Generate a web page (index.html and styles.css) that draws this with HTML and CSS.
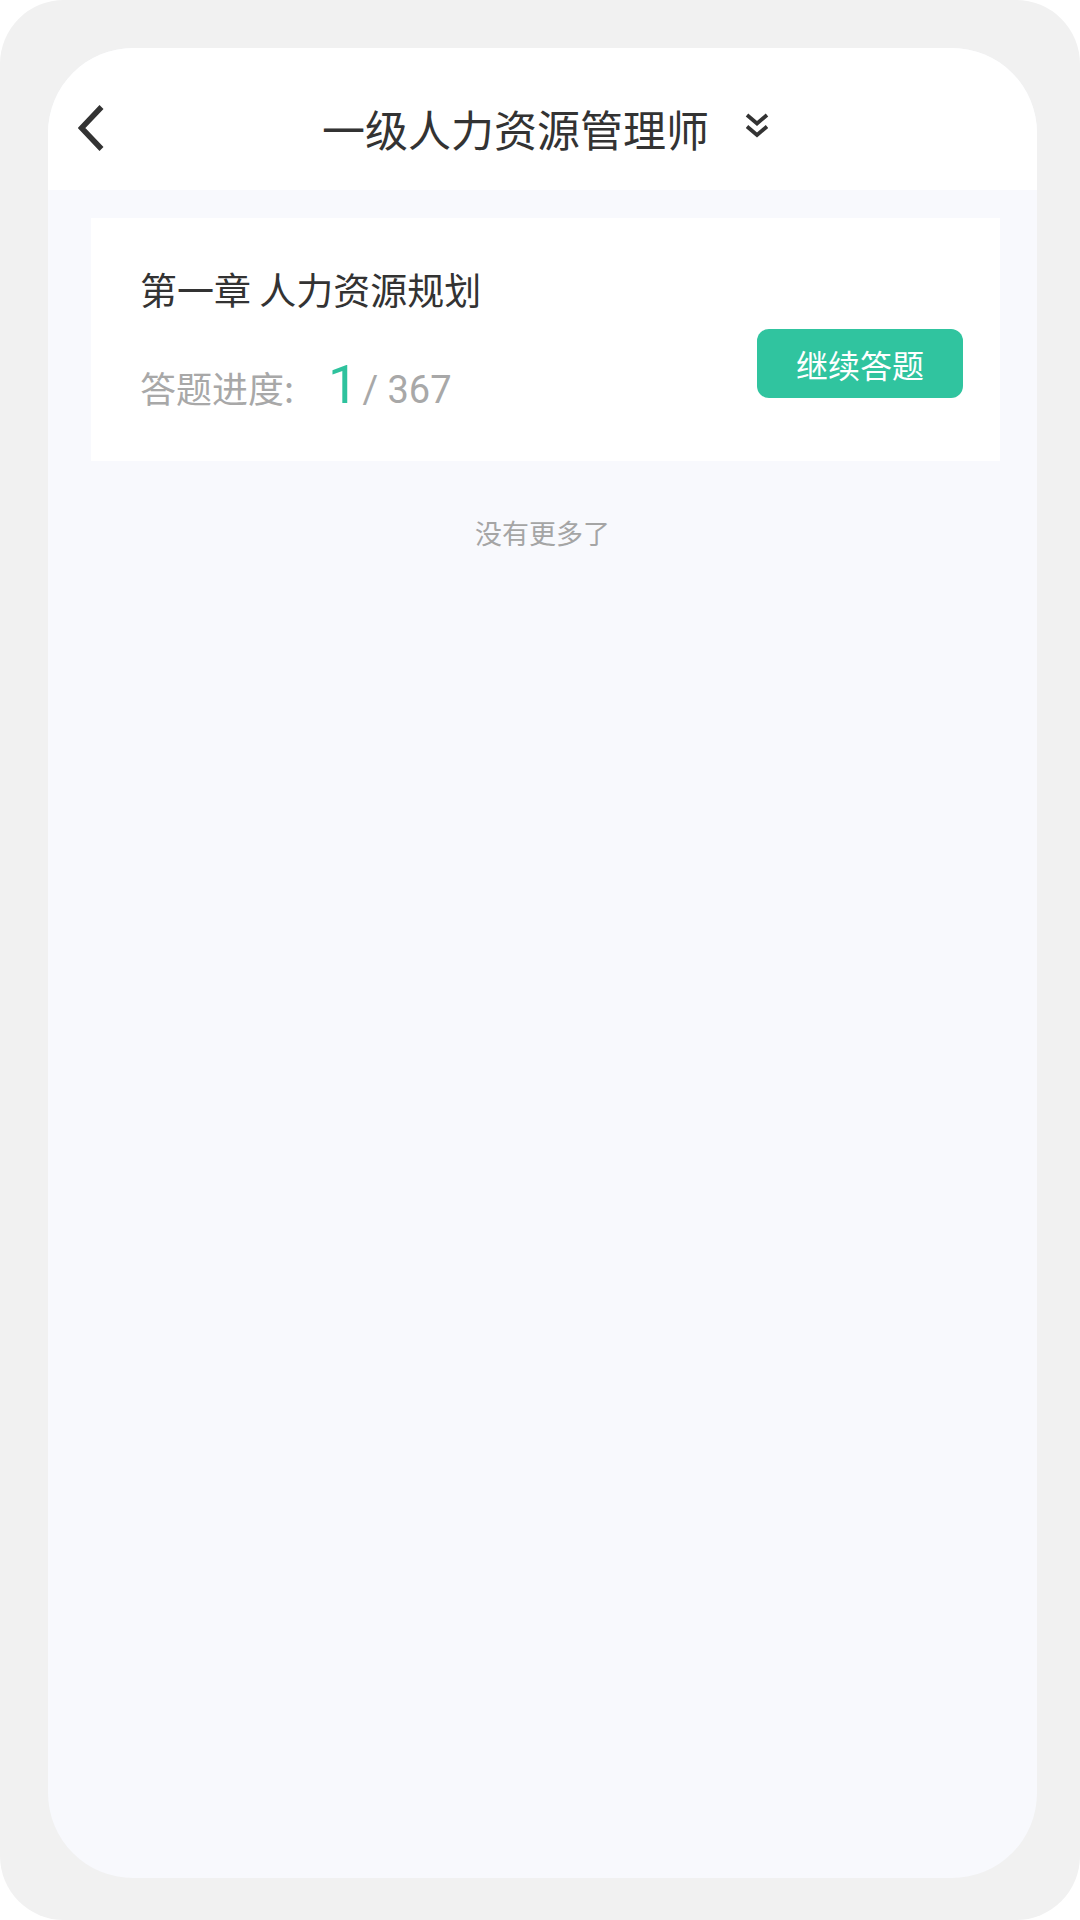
FILE: index.html
```html
<!DOCTYPE html>
<html lang="zh">
<head>
<meta charset="utf-8">
<title>一级人力资源管理师</title>
<link rel="stylesheet" href="styles.css">
</head>
<body>
<div class="frame">
  <div class="screen">
    <header class="header">
      <div class="back">
        <svg width="27" height="46" viewBox="0 0 27 46"><polyline points="23.5,2 3.5,23 23.5,44" fill="none" stroke="#333" stroke-width="5.5"/></svg>
      </div>
      <div class="title-group">
        <span class="title">一级人力资源管理师</span>
        <svg class="dbl" width="24" height="26" viewBox="0 0 24 26"><polyline points="2,2 12,10.5 22,2" fill="none" stroke="#333" stroke-width="3.8"/><polyline points="2,13.5 12,22 22,13.5" fill="none" stroke="#333" stroke-width="3.8"/></svg>
      </div>
      <div></div>
    </header>
    <section class="card">
      <div class="info">
        <div class="chapter">第一章 人力资源规划</div>
        <div class="progress">
          <span class="label">答题进度:</span>
          <span class="done">1</span>
          <span class="total">/ 367</span>
        </div>
      </div>
      <button class="continue">继续答题</button>
    </section>
    <p class="nomore">没有更多了</p>
  </div>
</div>
</body>
</html>
```

FILE: styles.css
```css
html, body {
  margin: 0;
  padding: 0;
  background: #ffffff;
}
body {
  width: 1080px;
  height: 1920px;
  font-family: "Noto Sans CJK SC", "Noto Sans", sans-serif;
}
.frame {
  box-sizing: border-box;
  width: 1080px;
  height: 1920px;
  background: #f1f1f1;
  border-radius: 64px;
  padding: 48px 43px 42px 48px;
}
.screen {
  height: 100%;
  background: #f8f9fd;
  border-radius: 85px;
  overflow: hidden;
}
.header {
  box-sizing: border-box;
  height: 142px;
  background: #ffffff;
  padding-top: 18px;
  display: grid;
  grid-template-columns: 1fr auto 1fr;
  align-items: center;
}
.back {
  padding-left: 30px;
  display: flex;
  align-items: center;
}
.back svg { display: block; }
.title-group {
  display: flex;
  align-items: center;
  gap: 36px;
  padding-left: 6px;
}
.title {
  font-size: 43px;
  line-height: 1;
  color: #333333;
}
.dbl {
  display: block;
  margin-top: -4px;
}
.card {
  margin: 28px 37px 0 43px;
  height: 243px;
  box-sizing: border-box;
  background: #ffffff;
  padding: 53px 37px 0 49px;
  display: flex;
  justify-content: space-between;
  align-items: flex-start;
}
.chapter {
  font-size: 37px;
  line-height: 1;
  color: #333333;
}
.progress {
  margin-top: 50px;
  display: flex;
  align-items: baseline;
  color: #a8a8a8;
  line-height: 1;
}
.label {
  font-size: 36px;
}
.done {
  font-family: Roboto, "Noto Sans", sans-serif;
  font-size: 54px;
  color: #2ec29d;
  margin-left: 34px;
}
.total {
  font-family: Roboto, "Noto Sans", sans-serif;
  font-size: 38px;
  margin-left: 4px;
}
.continue {
  margin-top: 58px;
  width: 206px;
  height: 69px;
  border: none;
  border-radius: 12px;
  background: #30c49f;
  color: #ffffff;
  font-family: "Noto Sans CJK SC", sans-serif;
  font-size: 32px;
  padding: 0;
}
.nomore {
  margin: 58px 0 0;
  text-align: center;
  font-size: 27px;
  line-height: 1;
  color: #a5a5a5;
}
```
